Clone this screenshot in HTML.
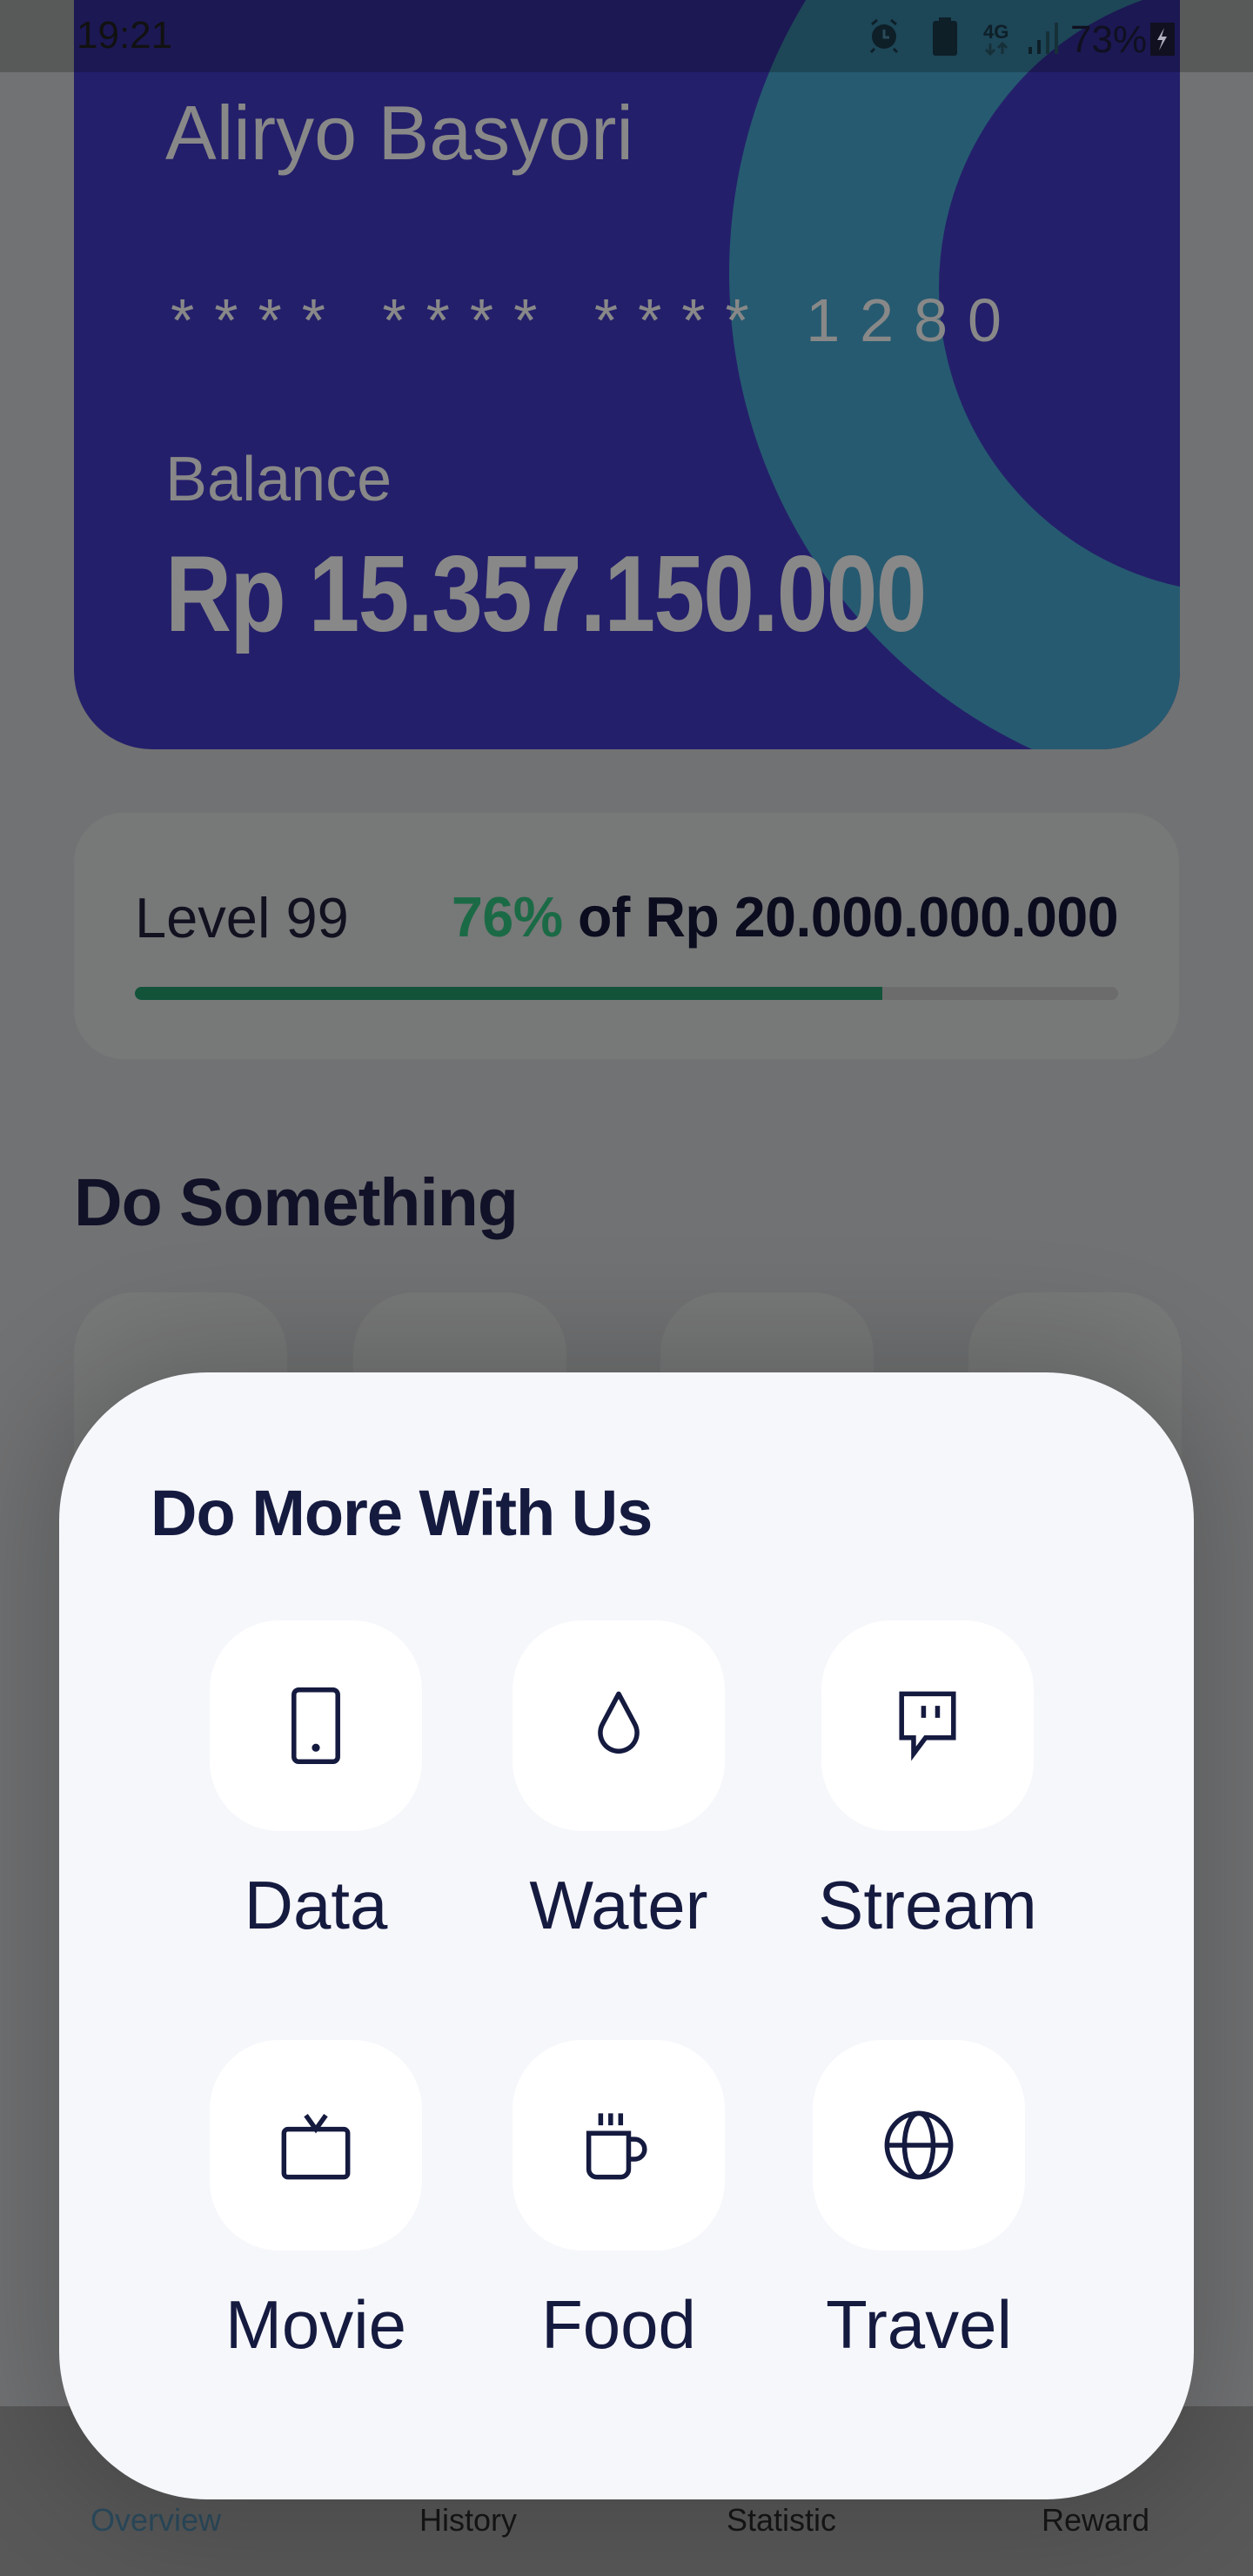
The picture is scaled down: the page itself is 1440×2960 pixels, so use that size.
<!DOCTYPE html>
<html><head><meta charset="utf-8"><style>
*{margin:0;padding:0;box-sizing:border-box}
body{width:1440px;height:2960px;overflow:hidden;background:#717273;font-family:"Liberation Sans",sans-serif;position:relative}
.a{position:absolute;white-space:nowrap}
.tile{position:absolute;width:244px;height:242px;background:#fff;border-radius:80px;display:flex;align-items:center;justify-content:center}
.lbl{position:absolute;width:400px;text-align:center;font-size:78px;color:#151a3f;line-height:1}
.ds{position:absolute;top:1485px;width:245px;height:600px;background:#777878;border-radius:70px}
.nav{position:absolute;top:2875px;font-size:36px;color:#161616;width:300px;text-align:center}
</style></head><body>
<div class="a" style="left:85px;top:-120px;width:1271px;height:981px;background:#241f6b;border-radius:90px;overflow:hidden">
  <div class="a" style="left:753px;top:-170px;width:1208px;height:1208px;border-radius:50%;background:#265a70"></div>
  <div class="a" style="left:994px;top:100px;width:702px;height:702px;border-radius:50%;background:#241f6b"></div>
</div>
<div class="a" style="left:190px;top:102px;font-size:88px;color:#888">Aliryo Basyori</div>
<div class="a" style="left:196px;top:328px;font-size:70px;color:#888;letter-spacing:23px">**** **** **** 1280</div>
<div class="a" style="left:190px;top:510px;font-size:72px;color:#888">Balance</div>
<div class="a" style="left:190px;top:612px;font-size:124px;font-weight:bold;color:#888;transform:scaleX(0.85);transform-origin:0 0;letter-spacing:-2px">Rp 15.357.150.000</div>
<div class="a" style="left:0;top:0;width:1440px;height:83px;background:rgba(0,0,0,0.22)"></div>
<div class="a" style="left:88px;top:16px;font-size:44px;color:#111">19:21</div>
<svg class="a" style="left:990px;top:14px" width="380" height="56" viewBox="0 0 380 56">
 <circle cx="26" cy="28" r="14" fill="#0e1f28"/><path d="M26 20v9h6" stroke="#2a4a58" stroke-width="3" fill="none"/>
 <path d="M12 14l6-5M40 14l-6-5M15 42l-4 4M37 42l4 4" stroke="#0e1f28" stroke-width="3"/>
 <rect x="82" y="10" width="28" height="40" rx="3" fill="#0e1f28"/><rect x="89" y="6" width="14" height="5" fill="#0e1f28"/>
 <text x="140" y="30" font-size="22" font-weight="bold" fill="#0e1f28" font-family="Liberation Sans">4G</text>
 <path d="M148 36v12M143 43l5 5 5-5M162 48v-12M157 41l5-5 5 5" stroke="#163038" stroke-width="3" fill="none"/>
 <rect x="192" y="40" width="4" height="8" fill="#0e1f28"/><rect x="202" y="32" width="4" height="16" fill="#0e1f28"/><rect x="212" y="22" width="4" height="26" fill="#163038"/><rect x="222" y="12" width="4" height="36" fill="#163038"/>
 <text x="240" y="46" font-size="44" fill="#101020" font-family="Liberation Sans">73%</text>
 <rect x="332" y="12" width="28" height="38" fill="#101020"/><path d="M348 18l-8 14h6l-4 12 9-16h-6z" fill="#b0b0c0"/>
</svg>
<div class="a" style="left:85px;top:934px;width:1270px;height:283px;background:#777878;border-radius:57px"></div>
<div class="a" style="left:155px;top:1017px;font-size:65px;color:#111120">Level 99</div>
<div class="a" style="left:519px;top:1017px;font-size:64.5px;font-weight:bold;color:#0b0c1e;letter-spacing:-0.5px"><span style="color:#1b6a46">76%</span> of Rp 20.000.000.000</div>
<div class="a" style="left:155px;top:1134px;width:1130px;height:15px;background:#6c6c6d;border-radius:8px"></div>
<div class="a" style="left:155px;top:1134px;width:859px;height:15px;background:#12533a;border-radius:8px 0 0 8px"></div>
<div class="a" style="left:85px;top:1338px;font-size:77px;font-weight:bold;color:#111128;letter-spacing:-1px">Do Something</div>
<div class="ds" style="left:85px"></div><div class="ds" style="left:406px"></div><div class="ds" style="left:759px"></div><div class="ds" style="left:1113px"></div>
<div class="a" style="left:0;top:2765px;width:1440px;height:195px;background:#585858"></div>
<div class="nav" style="left:29px;color:#2b4a5c">Overview</div>
<div class="nav" style="left:388px">History</div>
<div class="nav" style="left:748px">Statistic</div>
<div class="nav" style="left:1109px">Reward</div>
<div class="a" style="left:68px;top:1577px;width:1304px;height:1295px;background:#f6f7fb;border-radius:170px;box-shadow:0 0 140px 30px rgba(0,0,0,0.18)"></div>
<div class="a" style="left:173px;top:1696px;font-size:74px;font-weight:bold;color:#151a3f;letter-spacing:-1px">Do More With Us</div>
<div class="tile" style="left:241px;top:1862px"><svg width="110" height="110" viewBox="0 0 24 24" fill="none" stroke="#151a3f" stroke-width="1.2"><rect x="6.5" y="3" width="11" height="18" rx="1.2"/><circle cx="12" cy="17.5" r="0.4" fill="#151a3f"/></svg></div>
<div class="tile" style="left:589px;top:1862px"><svg width="110" height="110" viewBox="0 0 24 24" fill="none" stroke="#151a3f" stroke-width="1.2"><path d="M12 4L8 11.5a4.6 4.6 0 1 0 8 0z" stroke-linejoin="round"/></svg></div>
<div class="tile" style="left:944px;top:1862px"><svg width="110" height="110" viewBox="0 0 24 24" fill="none" stroke="#151a3f" stroke-width="1.2"><path d="M5.5 4h13v11h-7l-3 4v-4h-3z"/><path d="M11 7v3M14.5 7v3"/></svg></div>
<div class="lbl" style="left:163px;top:2150px">Data</div>
<div class="lbl" style="left:511px;top:2150px">Water</div>
<div class="lbl" style="left:866px;top:2150px">Stream</div>
<div class="tile" style="left:241px;top:2344px"><svg width="110" height="110" viewBox="0 0 24 24" fill="none" stroke="#151a3f" stroke-width="1.2"><rect x="4" y="8" width="16" height="12" rx="1"/><path d="M9.5 4.5l2.5 3.5 2.5-3.5"/></svg></div>
<div class="tile" style="left:589px;top:2344px"><svg width="110" height="110" viewBox="0 0 24 24" fill="none" stroke="#151a3f" stroke-width="1.2"><path d="M4.5 9h10v9a2 2 0 0 1-2 2h-6a2 2 0 0 1-2-2z"/><path d="M14.5 10.5h1.5a2.5 2.5 0 0 1 0 5h-1.5"/><path d="M7.5 4v3M10 4v3M12.5 4v3"/></svg></div>
<div class="tile" style="left:934px;top:2344px"><svg width="110" height="110" viewBox="0 0 24 24" fill="none" stroke="#151a3f" stroke-width="1.2"><circle cx="12" cy="12" r="8"/><ellipse cx="12" cy="12" rx="3.6" ry="8"/><path d="M4 12h16"/></svg></div>
<div class="lbl" style="left:163px;top:2632px">Movie</div>
<div class="lbl" style="left:511px;top:2632px">Food</div>
<div class="lbl" style="left:856px;top:2632px">Travel</div>
</body></html>
